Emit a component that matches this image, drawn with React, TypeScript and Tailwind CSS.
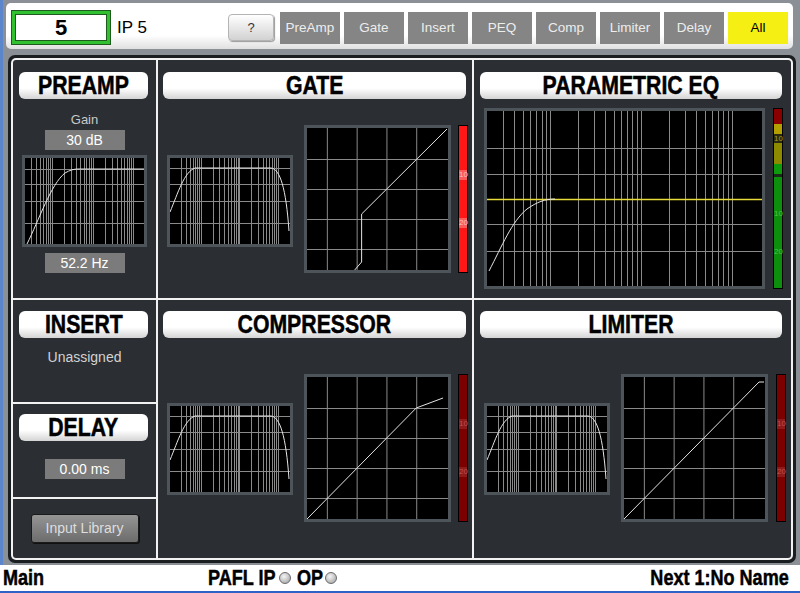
import React from 'react';

// log-spaced frequency grid lines (30 Hz .. 10 kHz)
const FREQS = [
  30, 40, 50, 60, 70, 80, 90, 100, 200, 300, 400, 500, 600, 700, 800, 900, 1000, 2000, 3000, 4000,
  5000, 6000, 7000, 8000, 9000, 10000
];

// condensed heading look: Arial-width bold squeezed horizontally
const heavy = "font-['Liberation_Sans',Arial,sans-serif] font-bold [-webkit-text-stroke:0.5px_black]";

function Title({ children, className }: { children: React.ReactNode; className: string }) {
  return (
    <div
      className={`h-[27px] overflow-hidden rounded-[6px] bg-linear-to-b from-white from-60% to-[#d4d4d4] text-center text-[25px] leading-[27px] text-black ${heavy} ${className}`}
    >
      <span className="inline-block origin-center scale-x-[0.85] whitespace-nowrap">{children}</span>
    </div>
  );
}

function ValueBox({ children, className = '' }: { children: React.ReactNode; className?: string }) {
  return (
    <div className={`h-[20px] w-[80px] bg-[#7b7b7b] text-center text-[14px] leading-[20px] text-white ${className}`}>
      {children}
    </div>
  );
}

type FreqProps = {
  w: number;
  h: number;
  x0: number;
  dec: number;
  rows: number[];
  curve: string;
  yellow?: number;
};

function FreqGrid({ w, h, x0, dec, rows, curve, yellow }: FreqProps) {
  return (
    <svg width={w} height={h} viewBox={`0 0 ${w} ${h}`} className="block">
      {FREQS.map((f) => {
        const x = Math.round(x0 + Math.log10(f / 30) * dec) + 0.5;
        return <line key={f} x1={x} y1={0} x2={x} y2={h} stroke="#8a8a8a" strokeWidth={1} />;
      })}
      {rows.map((y) => (
        <line key={y} x1={0} y1={y + 0.5} x2={w} y2={y + 0.5} stroke="#8a8a8a" strokeWidth={1} />
      ))}
      {yellow !== undefined && (
        <line x1={0} y1={yellow + 0.5} x2={w} y2={yellow + 0.5} stroke="#e8dc3c" strokeWidth={1.3} />
      )}
      <path d={curve} fill="none" stroke="#e6e6e6" strokeWidth={1} />
    </svg>
  );
}

const BAND_CURVE = 'M0,54 C8,35 14,14 25,10 L101,10 C110,11 116,30 119,73';

function SmallGraph({ className = '' }: { className?: string }) {
  return (
    <div className={`h-[92px] w-[126px] border-[3px] border-[#4d545a] bg-black ${className}`}>
      <FreqGrid w={120} h={86} x0={11} dec={38.4} rows={[10, 26, 43, 65]} curve={BAND_CURVE} />
    </div>
  );
}

function DynGraph({ path, className = '' }: { path: string; className?: string }) {
  const lines = [20, 50, 80, 110];
  return (
    <div className={`h-[148px] w-[147px] border-[3px] border-[#4d545a] bg-black ${className}`}>
      <svg width={141} height={142} viewBox="0 0 142 142" preserveAspectRatio="none" className="block">
        {lines.map((v) => (
          <g key={v}>
            <line x1={v + 0.5} y1={0} x2={v + 0.5} y2={142} stroke="#8a8a8a" strokeWidth={1} />
            <line x1={0} y1={142 - v - 0.5} x2={142} y2={142 - v - 0.5} stroke="#8a8a8a" strokeWidth={1} />
          </g>
        ))}
        <path d={path} fill="none" stroke="#e6e6e6" strokeWidth={1} />
      </svg>
    </div>
  );
}

function Meter({ bright, className = '' }: { bright?: boolean; className?: string }) {
  const label = bright ? 'bg-[#ff5a5a] text-[#ffc0c0]' : 'bg-[#8e1a1a] text-[#c05050]';
  return (
    <div
      className={`relative h-[148px] w-[10px] border border-black ${bright ? 'bg-[#ff1616]' : 'bg-[#7c0000]'} ${className}`}
    >
      <span className={`absolute left-0 top-[44px] w-full text-center text-[8px] leading-[10px] ${label}`}>10</span>
      <span className={`absolute left-0 top-[92px] w-full text-center text-[8px] leading-[10px] ${label}`}>20</span>
    </div>
  );
}

function PeqMeter() {
  return (
    <div className="relative ml-[8px] flex h-[181px] w-[10px] flex-col border border-black bg-[#0e1a0e]">
      <div className="h-[15px] bg-[#8a0000]" />
      <div className="h-[10px] bg-[#b3a000]" />
      <div className="h-[9px] bg-[#2a2a10]" />
      <div className="h-[21px] bg-[#8d8a00]" />
      <div className="h-[10px] bg-[#0d9a0d]" />
      <div className="h-[3px] bg-[#1a2a1a]" />
      <div className="flex-1 bg-[#0d8f0d]" />
      <span className="absolute left-0 top-[25px] w-full text-center text-[8px] leading-[10px] text-[#a89a20]">10</span>
      <span className="absolute left-0 top-[100px] w-full text-center text-[8px] leading-[10px] text-[#4cc24c]">10</span>
      <span className="absolute left-0 top-[138px] w-full text-center text-[8px] leading-[10px] text-[#4cc24c]">20</span>
    </div>
  );
}

const TABS = ['PreAmp', 'Gate', 'Insert', 'PEQ', 'Comp', 'Limiter', 'Delay'];

function TopBar() {
  return (
    <div className="flex h-[46px] w-[787px] items-start rounded-[5px] bg-linear-to-b from-white from-70% to-[#e0e0e0] pl-[6px] pr-[5px] pt-[8px]">
      <div className="flex h-[33px] w-[98px] items-center justify-center border-[3px] border-[#30c030] bg-white text-[22px] font-bold text-black shadow-[0_0_0_1px_#1f5a1f,inset_0_0_0_1px_#1f5a1f]">
        5
      </div>
      <div className="ml-[7px] text-[17px] leading-[33px] text-black">IP 5</div>
      <div className="ml-auto mt-[1px] flex gap-[4px]">
        <div className="mr-[2px] mt-[2px] flex h-[27px] w-[46px] items-center justify-center rounded-[4px] border border-[#b4b4b4] bg-linear-to-b from-white to-[#d2d2d2] text-[13px] text-[#333] shadow-[1px_1px_1px_#9a9a9a]">
          ?
        </div>
        {TABS.map((t) => (
          <div
            key={t}
            className="flex h-[32px] w-[60px] items-center justify-center bg-[#858585] text-[13.5px] text-[#ededed]"
          >
            {t}
          </div>
        ))}
        <div className="flex h-[32px] w-[60px] items-center justify-center bg-[#f5ef14] text-[13.5px] text-black">
          All
        </div>
      </div>
    </div>
  );
}

function Led() {
  return (
    <span className="h-[12px] w-[12px] rounded-full border border-[#6a6a6a] bg-[radial-gradient(circle_at_40%_35%,#f4f4f4,#9c9c9c)]" />
  );
}

export default function App() {
  return (
    <div className="flex h-[593px] w-[800px] flex-col overflow-hidden bg-[#8b9096] font-['Liberation_Sans',Arial,sans-serif]">
      <div className="h-[565px] border-l-[3px] border-[#5b86cc] pl-[3px] pt-[3px]">
        <TopBar />

        {/* Channel processing panel */}
        <div className="ml-[2px] mt-[6px] h-[508px] w-[788px] rounded-[7px] bg-[#1b1e21] p-[3px]">
          <div className="grid h-full w-full grid-cols-[143px_314px_317px] grid-rows-[238px_258px] gap-[2px] rounded-[5px] bg-[#f2f2f2] p-[2px]">
            {/* Preamp */}
            <div className="flex flex-col items-center rounded-tl-[3px] bg-[#2b2f33]">
              <Title className="mt-[12px] ml-[6px] w-[129px] self-start">PREAMP</Title>
              <div className="mt-[13px] h-[16px] text-[13px] leading-[16px] text-[#c9c9c9]">Gain</div>
              <ValueBox className="mt-[2px]">30 dB</ValueBox>
              <div className="mt-[5px] h-[92px] w-[125px] border-[3px] border-[#4d545a] bg-black">
                <FreqGrid
                  w={119}
                  h={86}
                  x0={6}
                  dec={40.4}
                  rows={[11, 26, 43, 65]}
                  curve="M2,86 C14,62 26,26 40,15 C45,12 49,11 53,11 L119,11"
                />
              </div>
              <ValueBox className="mt-[6px]">52.2 Hz</ValueBox>
            </div>

            {/* Gate */}
            <div className="flex flex-col bg-[#2b2f33]">
              <Title className="mt-[12px] ml-[5px] w-[303px]">GATE</Title>
              <div className="mt-[26px] flex items-start pl-[9px]">
                <SmallGraph className="mt-[30px]" />
                <DynGraph className="ml-[11px]" path="M141,1 L55,86 L55,134 L48,142" />
                <Meter bright className="ml-[7px]" />
              </div>
            </div>

            {/* Parametric EQ */}
            <div className="flex flex-col rounded-tr-[3px] bg-[#2b2f33]">
              <Title className="mt-[12px] ml-[6px] w-[302px]">PARAMETRIC EQ</Title>
              <div className="mt-[9px] flex items-start pl-[10px]">
                <div className="h-[181px] w-[281px] border-[3px] border-[#4d545a] bg-black">
                  <FreqGrid
                    w={275}
                    h={175}
                    x0={16}
                    dec={90.8}
                    rows={[37, 63, 113, 140]}
                    yellow={88}
                    curve="M2,160 C15,135 25,110 40,98 C50,91 58,88 68,88"
                  />
                </div>
                <PeqMeter />
              </div>
            </div>

            {/* Insert / Delay / Library */}
            <div className="flex flex-col gap-[2px] bg-[#f2f2f2]">
              <div className="flex h-[102px] flex-col items-center bg-[#2b2f33]">
                <Title className="mt-[11px] ml-[6px] w-[129px] self-start">INSERT</Title>
                <div className="mt-[10px] text-[14px] leading-[18px] text-[#d2d2d2]">Unassigned</div>
              </div>
              <div className="flex h-[93px] flex-col items-center bg-[#2b2f33]">
                <Title className="mt-[10px] ml-[6px] w-[129px] self-start">DELAY</Title>
                <ValueBox className="mt-[18px]">0.00 ms</ValueBox>
              </div>
              <div className="flex flex-1 justify-center rounded-bl-[3px] bg-[#2b2f33]">
                <div className="mt-[15px] flex h-[29px] w-[108px] items-center justify-center rounded-[3px] border border-[#1a1a1a] bg-linear-to-b from-[#959595] to-[#6c6c6c] text-[14px] text-[#dedede] shadow-[1px_1px_0_#111]">
                  Input Library
                </div>
              </div>
            </div>

            {/* Compressor */}
            <div className="flex flex-col bg-[#2b2f33]">
              <Title className="mt-[11px] ml-[5px] w-[303px]">COMPRESSOR</Title>
              <div className="mt-[36px] flex items-start pl-[9px]">
                <SmallGraph className="mt-[29px]" />
                <DynGraph className="ml-[11px]" path="M0,142 L110,31 L137,21" />
                <Meter className="ml-[7px]" />
              </div>
            </div>

            {/* Limiter */}
            <div className="flex flex-col rounded-br-[3px] bg-[#2b2f33]">
              <Title className="mt-[11px] ml-[6px] w-[302px]">LIMITER</Title>
              <div className="mt-[36px] flex items-start pl-[10px]">
                <SmallGraph className="mt-[29px]" />
                <DynGraph className="ml-[11px]" path="M0,142 L136,5 L141,5" />
                <Meter className="ml-[8px]" />
              </div>
            </div>
          </div>
        </div>
      </div>

      {/* Status footer */}
      <div className={`flex h-[28px] items-center border-b-2 border-[#2f62c6] bg-white text-[22px] leading-[26px] text-black ${heavy}`}>
        <span className="w-[208px] pl-[3px]">
          <span className="inline-block origin-left scale-x-[0.82] whitespace-nowrap">Main</span>
        </span>
        <span className="w-[69px] whitespace-nowrap">
          <span className="inline-block origin-left scale-x-[0.82]">PAFL IP</span>
        </span>
        <span className="ml-[2px] flex">
          <Led />
        </span>
        <span className="ml-[6px] w-[26px] whitespace-nowrap">
          <span className="inline-block origin-left scale-x-[0.82]">OP</span>
        </span>
        <span className="ml-[2px] flex">
          <Led />
        </span>
        <span className="ml-auto whitespace-nowrap pr-[11px]">
          <span className="inline-block origin-right scale-x-[0.82]">Next 1:No Name</span>
        </span>
      </div>
    </div>
  );
}
